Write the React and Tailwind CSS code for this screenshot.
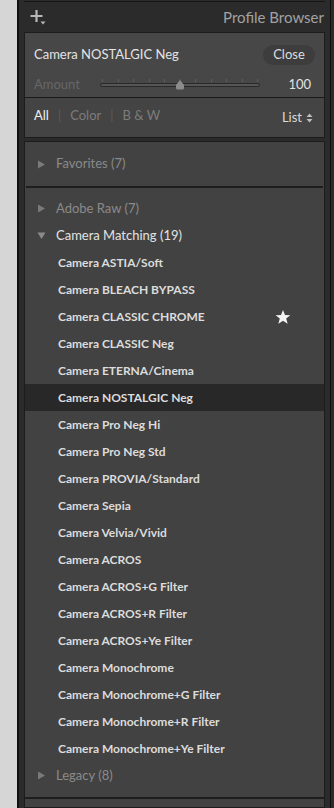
import { useState } from "react";

const profiles = [
  "Camera ASTIA/Soft",
  "Camera BLEACH BYPASS",
  "Camera CLASSIC CHROME",
  "Camera CLASSIC Neg",
  "Camera ETERNA/Cinema",
  "Camera NOSTALGIC Neg",
  "Camera Pro Neg Hi",
  "Camera Pro Neg Std",
  "Camera PROVIA/Standard",
  "Camera Sepia",
  "Camera Velvia/Vivid",
  "Camera ACROS",
  "Camera ACROS+G Filter",
  "Camera ACROS+R Filter",
  "Camera ACROS+Ye Filter",
  "Camera Monochrome",
  "Camera Monochrome+G Filter",
  "Camera Monochrome+R Filter",
  "Camera Monochrome+Ye Filter",
];

const Caret = ({ open }) => (
  <svg width="9" height="9" viewBox="0 0 9 9" className="shrink-0">
    {open ? (
      <path d="M0.5 1.5 L8.5 1.5 L4.5 8 Z" fill="#8a8a8a" />
    ) : (
      <path d="M1 0.5 L8 4.5 L1 8.5 Z" fill="#7a7a7a" />
    )}
  </svg>
);

const Group = ({ label, open, dim = true }) => (
  <div className="flex h-[27px] items-center gap-[10px] pl-[12px]">
    <Caret open={open} />
    <span className={dim ? "text-[13px] text-[#8a8a8a]" : "text-[13px] text-[#e2e2e2]"}>
      {label}
    </span>
  </div>
);

const Slider = () => {
  const ticks = Array.from({ length: 11 }, (_, i) => i);
  return (
    <div className="relative h-[14px] w-[160px]">
      <div className="absolute left-0 right-0 top-[1px] flex justify-between px-[2px]">
        {ticks.map((t) => (
          <span key={t} className="h-[3px] w-px bg-[#5e5e5e]" />
        ))}
      </div>
      <div className="absolute left-0 right-0 top-[5px] h-[4px] rounded-full border border-[#2a2a2a] bg-[#555]" />
      <svg width="10" height="10" viewBox="0 0 10 10" className="absolute left-[75px] top-[2px]">
        <path d="M5 0 L9 5 L9 8 Q9 9.5 7.5 9.5 L2.5 9.5 Q1 9.5 1 8 L1 5 Z" fill="#8c8c8c" />
      </svg>
    </div>
  );
};

export default function App() {
  const [selected] = useState("Camera NOSTALGIC Neg");

  return (
    <div className="flex h-[808px] w-[334px] overflow-hidden bg-[#d6d6d6] font-['Lato','Liberation_Sans',sans-serif]">
      <div className="ml-[17px] w-[2px] bg-[#0f0f0f]" />
      <div className="flex flex-1 flex-col bg-[#2b2b2b] pl-[5px] pr-[5px]">
        <div className="h-[2px] border-b border-[#151515]" />
        {/* header */}
        <div className="flex h-[30px] items-center justify-between pl-[6px] pr-[1px]">
          <svg width="16" height="16" viewBox="0 0 16 16">
            <path d="M0.5 7 H12.5 M6.5 1 V13" stroke="#b8b8b8" strokeWidth="2.2" />
            <path d="M10.5 12.5 L15.5 12.5 L13 15.5 Z" fill="#b8b8b8" />
          </svg>
          <span className="text-[15px] text-[#a2a2a2]">Profile Browser</span>
        </div>

        {/* current profile box */}
        <div className="border border-[#1c1c1c] bg-[#474747]">
          <div className="px-[9px]">
            <div className="flex h-[42px] items-center justify-between pt-[2px]">
              <span className="text-[13px] text-[#e4e4e4]">{selected}</span>
              <button className="h-[20px] w-[52px] rounded-full bg-[#3d3d3d] text-[13px] text-[#dedede]">
                Close
              </button>
            </div>
            <div className="flex h-[22px] items-center pb-[3px]">
              <span className="w-[66px] text-[13px] text-[#666]">Amount</span>
              <Slider />
              <span className="ml-auto pr-[4px] text-[13px] text-[#e2e2e2]">100</span>
            </div>
          </div>
          <div className="h-px bg-[#1a1a1a]" />
          <div className="flex h-[39px] items-center justify-between bg-[#444] px-[9px] pb-[4px]">
            <div className="flex items-center gap-[9px] text-[13px]">
              <span className="text-[#efefef]">All</span>
              <span className="text-[#5a5a5a]">|</span>
              <span className="text-[#7c7c7c]">Color</span>
              <span className="text-[#5a5a5a]">|</span>
              <span className="text-[#7c7c7c]">B &amp; W</span>
            </div>
            <div className="flex items-center gap-[4px] pr-[2px] pt-[4px] text-[13px] text-[#dadada]">
              <span>List</span>
              <svg width="7" height="10" viewBox="0 0 7 10">
                <path d="M0.5 4 L3.5 0.5 L6.5 4 Z M0.5 6 L3.5 9.5 L6.5 6 Z" fill="#bdbdbd" />
              </svg>
            </div>
          </div>
        </div>

        <div className="h-[3px]" />

        {/* profile list */}
        <div className="flex-1 border border-[#1c1c1c] bg-[#424242]">
          <div className="flex h-[44px] items-center">
            <Group label="Favorites (7)" />
          </div>
          <div className="mx-px h-[2px] bg-[#1e1e1e]" />
          <div className="pt-[7px]">
            <Group label="Adobe Raw (7)" />
            <Group label="Camera Matching (19)" open dim={false} />
            {profiles.map((name) => (
              <div
                key={name}
                className={
                  name === selected
                    ? "flex h-[27px] items-center justify-between bg-[#282828] pl-[33px] pr-[33px]"
                    : "flex h-[27px] items-center justify-between pl-[33px] pr-[33px]"
                }
              >
                <span className="text-[12px] font-bold text-[#dcdcdc]">{name}</span>
                {name === "Camera CLASSIC CHROME" && (
                  <svg width="16" height="16" viewBox="0 0 24 24">
                    <path
                      d="M12 1.5 L15 9 L23 9.3 L16.8 14.3 L19 22.2 L12 17.6 L5 22.2 L7.2 14.3 L1 9.3 L9 9 Z"
                      fill="#f4f4f4"
                    />
                  </svg>
                )}
              </div>
            ))}
            <Group label="Legacy (8)" />
          </div>
          <div className="mt-[8px] h-[2px] bg-[#1e1e1e]" />
        </div>
      </div>
      <div className="w-px bg-[#101010]" />
      <div className="w-[3px] bg-[#2b2b2b]" />
    </div>
  );
}
